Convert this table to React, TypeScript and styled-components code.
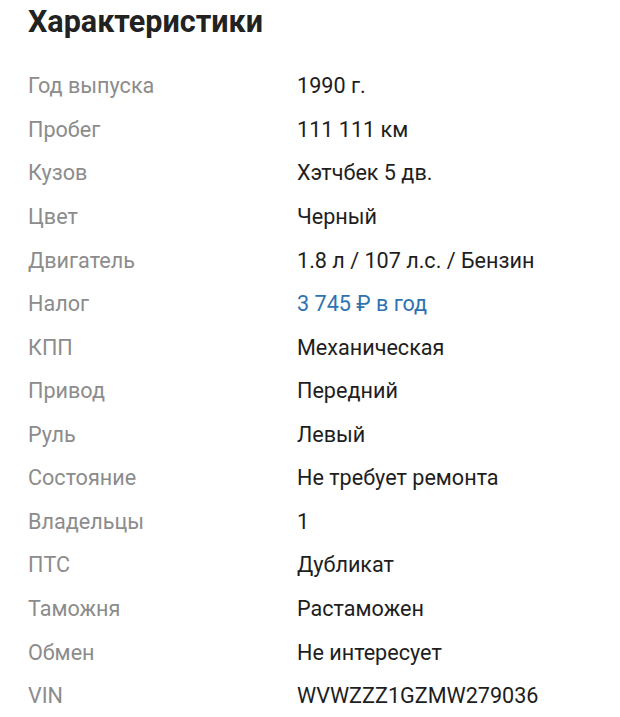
import React from "react";
import styled, { createGlobalStyle } from "styled-components";

const Global = createGlobalStyle`
  html, body { margin: 0; padding: 0; background: #fff; }
  body { font-family: Roboto, "Noto Sans", sans-serif; }
`;

const Page = styled.div`
  padding: 0 20px 0 28px;
`;

const Title = styled.h1`
  margin: 0;
  height: 64px;
  padding-top: 3px;
  box-sizing: border-box;
  font-size: 30.5px;
  line-height: 38px;
  font-weight: 700;
  color: #222;
`;

const List = styled.div`
  display: flex;
  flex-direction: column;
`;

const Row = styled.div`
  display: grid;
  grid-template-columns: 269px 1fr;
  align-items: center;
  height: 43.57px;
  font-size: 21.6px;
`;

const Label = styled.div`
  color: #8c8c8c;
`;

const Value = styled.div<{ $link?: boolean }>`
  color: ${(p) => (p.$link ? "#2f72b0" : "#1e1e1e")};
`;

const rows: [string, string, boolean?][] = [
  ["Год выпуска", "1990 г."],
  ["Пробег", "111 111 км"],
  ["Кузов", "Хэтчбек 5 дв."],
  ["Цвет", "Черный"],
  ["Двигатель", "1.8 л / 107 л.с. / Бензин"],
  ["Налог", "3 745 ₽ в год", true],
  ["КПП", "Механическая"],
  ["Привод", "Передний"],
  ["Руль", "Левый"],
  ["Состояние", "Не требует ремонта"],
  ["Владельцы", "1"],
  ["ПТС", "Дубликат"],
  ["Таможня", "Растаможен"],
  ["Обмен", "Не интересует"],
  ["VIN", "WVWZZZ1GZMW279036"],
];

export default function App() {
  return (
    <>
      <Global />
      <Page>
        <Title>Характеристики</Title>
        <List>
          {rows.map(([l, v, link]) => (
            <Row key={l}>
              <Label>{l}</Label>
              <Value $link={link}>{v}</Value>
            </Row>
          ))}
        </List>
      </Page>
    </>
  );
}
